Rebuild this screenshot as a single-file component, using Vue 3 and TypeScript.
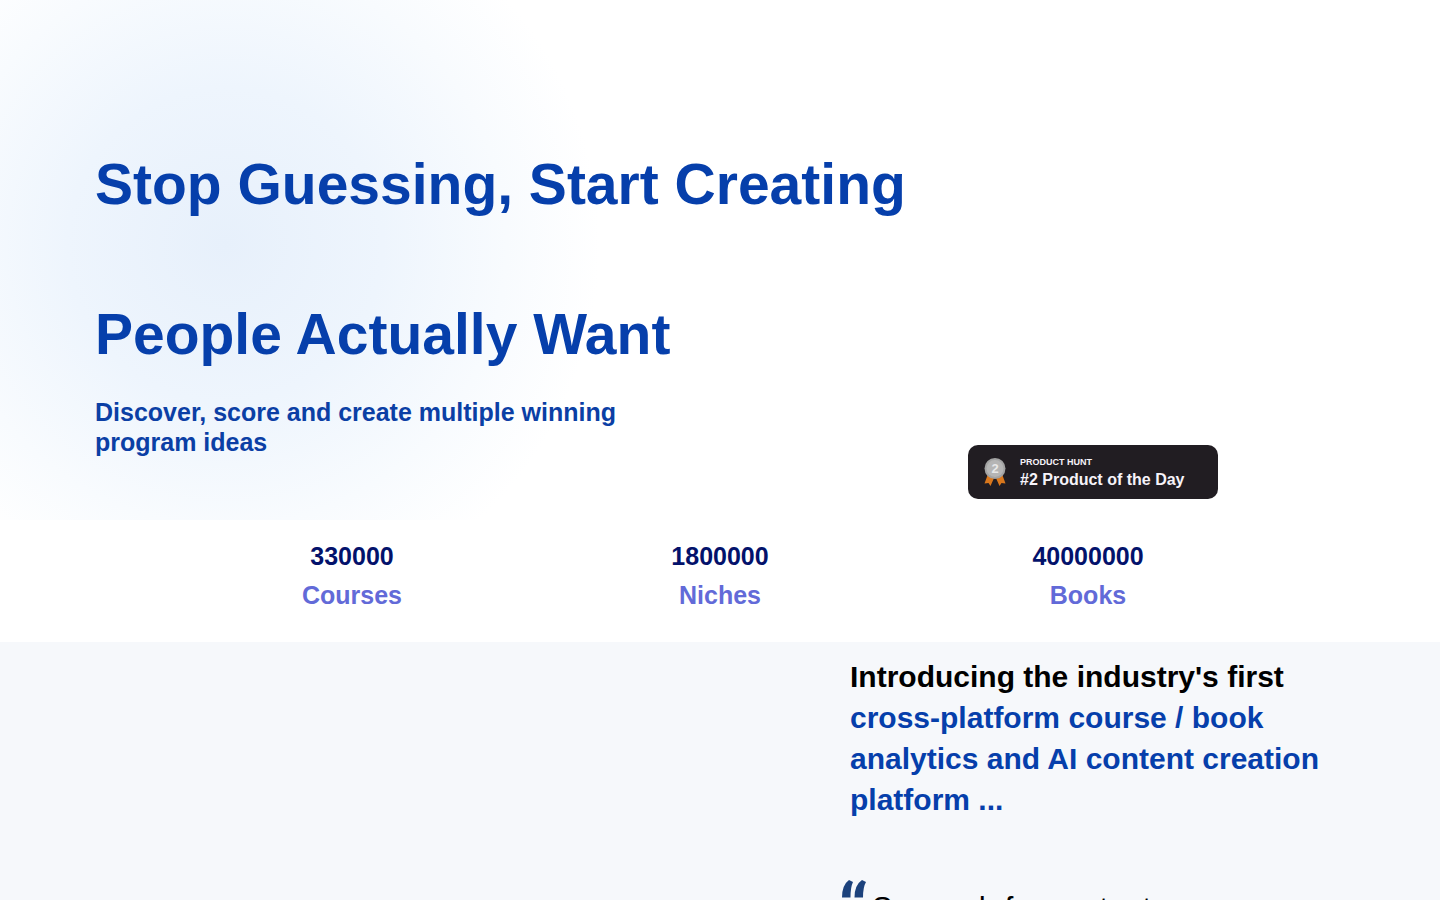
<script setup lang="ts">
interface Stat {
  value: string
  label: string
}

const stats: Stat[] = [
  { value: '330000', label: 'Courses' },
  { value: '1800000', label: 'Niches' },
  { value: '40000000', label: 'Books' },
]
</script>

<template>
  <main class="page">
    <section class="hero">
      <div class="hero-copy">
        <h1>Stop Guessing, Start Creating<br />People Actually Want</h1>
        <p class="tagline">Discover, score and create multiple winning program ideas</p>
      </div>
      <a class="badge" href="#product-hunt">
        <svg class="medal" viewBox="0 0 22 30" aria-hidden="true">
          <path d="M4 17 L0.500 26.500 L4.500 26 L6.500 29 L10.500 20 Z" fill="#d9771c" />
          <path d="M18 17 L21.500 26.500 L17.500 26 L15.500 29 L11.500 20 Z" fill="#d9771c" />
          <circle cx="11" cy="11.500" r="10.500" fill="#a3a3a3" />
          <circle cx="11" cy="11.500" r="8.500" fill="#b5b5b5" />
          <text x="11" y="16" text-anchor="middle">2</text>
        </svg>
        <span class="badge-copy">
          <span class="badge-brand">PRODUCT HUNT</span>
          <span class="badge-title">#2 Product of the Day</span>
        </span>
      </a>
    </section>

    <section class="stats">
      <div v-for="stat in stats" :key="stat.label" class="stat">
        <strong>{{ stat.value }}</strong>
        <span>{{ stat.label }}</span>
      </div>
    </section>

    <section class="intro">
      <div class="intro-copy">
        <h2>Introducing the industry's first <em>cross-platform course / book analytics and AI content creation platform ...</em></h2>
        <blockquote>
          <svg class="quote-mark" viewBox="0 0 24 18" aria-hidden="true">
            <path d="M7 0 L11 2 Q8.500 7 8.500 17.500 H0 Q0 5 7 0 Z" fill="#1c427c" />
            <path d="M20 0 L24 2 Q21 7 21 17.500 H12.500 Q12.500 5 20 0 Z" fill="#1c427c" />
          </svg>
          <p>Semrush for content</p>
        </blockquote>
      </div>
    </section>
  </main>
</template>

<style>
body {
  margin: 0;
}
</style>

<style scoped>
.page {
  font-family: "Liberation Sans", Arial, sans-serif;
  background: #fff;
  color: #000;
}

h1,
h2,
p,
blockquote {
  margin: 0;
}

.hero {
  display: grid;
  grid-template-columns: 1fr 250px;
  align-items: end;
  padding: 109px 222px 21px 95px;
  background: radial-gradient(circle 375px at 225px 245px, #e7f0fb 0%, #eef5fd 42%, #f8fbfe 75%, #fff 100%);
}

h1 {
  font-size: 57px;
  line-height: 150px;
  font-weight: 700;
  color: #063fab;
  white-space: nowrap;
}

.hero-copy {
  padding-bottom: 42px;
}

.tagline {
  max-width: 540px;
  margin-top: -12px;
  font-size: 25px;
  line-height: 30px;
  font-weight: 700;
  color: #0b3fa5;
}

.badge {
  display: flex;
  align-items: center;
  gap: 14px;
  height: 54px;
  padding-left: 16px;
  box-sizing: border-box;
  border-radius: 10px;
  background: #211d22;
  color: #f6f3f9;
  text-decoration: none;
}

.medal {
  width: 22px;
  height: 30px;
}

.medal text {
  font-size: 13px;
  font-weight: 700;
  fill: #e8e8e8;
}

.badge-copy {
  display: flex;
  flex-direction: column;
  padding-top: 3px;
  font-weight: 700;
}

.badge-brand {
  font-size: 9px;
  line-height: 12px;
}

.badge-title {
  font-size: 16px;
  line-height: 23px;
}

.stats {
  display: grid;
  grid-template-columns: repeat(3, 1fr);
  max-width: 1104px;
  margin: 0 auto;
  padding: 17px 0 27px;
}

.stat {
  display: flex;
  flex-direction: column;
  align-items: center;
  font-size: 25px;
  line-height: 39px;
  font-weight: 700;
}

.stat strong {
  color: #03126b;
}

.stat span {
  color: #626ad8;
}

.intro {
  display: grid;
  grid-template-columns: 1fr 470px;
  padding: 14px 120px 40px;
  background: #f6f8fb;
}

.intro-copy {
  grid-column: 2;
}

h2 {
  font-size: 30px;
  line-height: 41px;
  font-weight: 700;
}

h2 em {
  font-style: normal;
  color: #063fab;
}

blockquote {
  display: flex;
  gap: 6px;
  margin: 60px 0 0 -8px;
}

.quote-mark {
  flex: none;
  width: 24px;
  height: 18px;
}

blockquote p {
  padding-top: 9px;
  font-size: 31px;
  line-height: 40px;
}
</style>
